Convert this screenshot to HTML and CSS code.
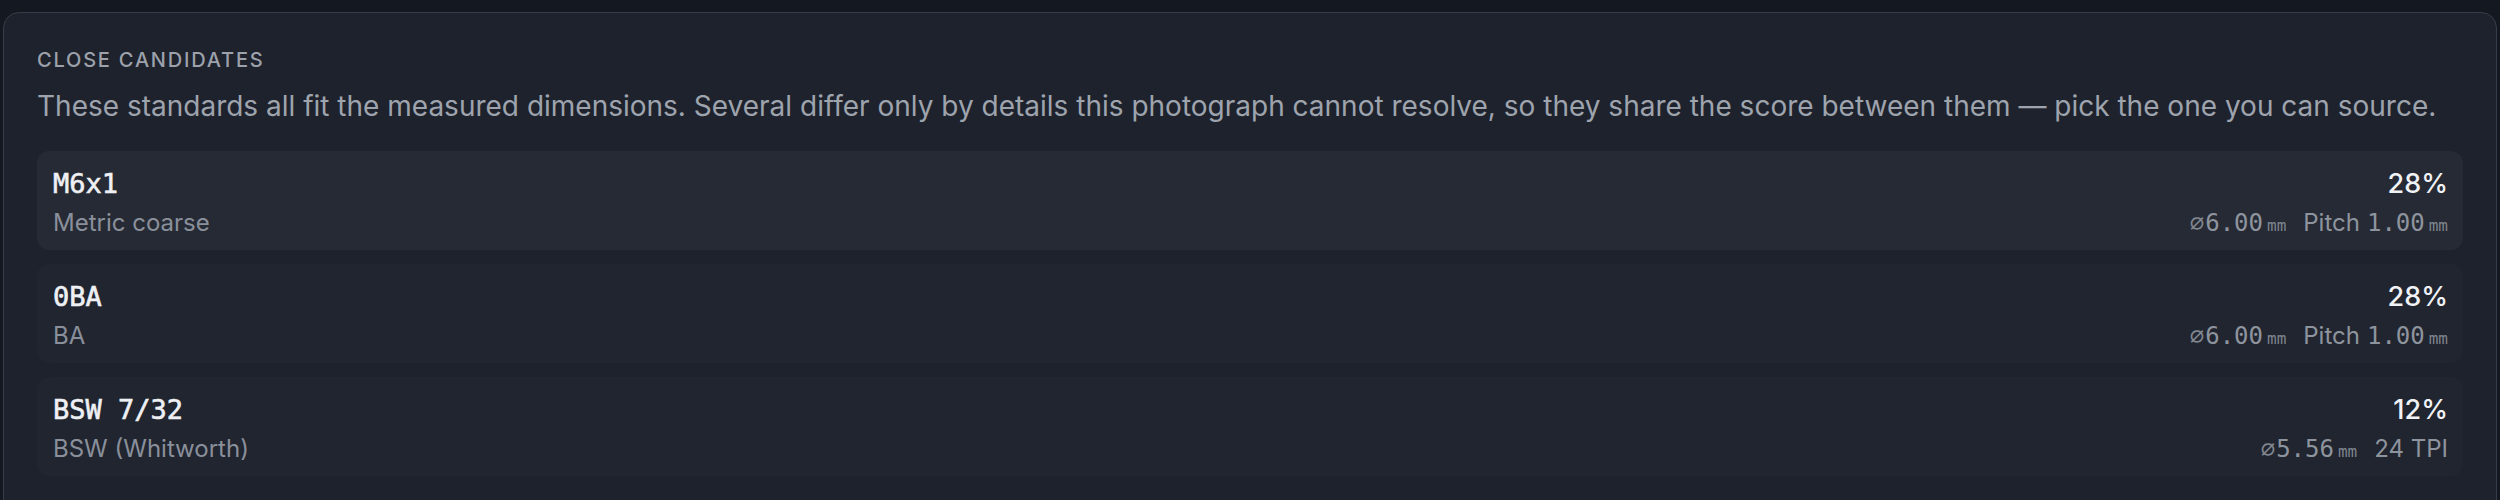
FILE: index.html
```html
<!DOCTYPE html>
<html lang="en">
<head>
<meta charset="utf-8">
<title>Close candidates</title>
<link rel="stylesheet" href="styles.css">
</head>
<body>
<section class="card">
  <h2 class="heading">Close candidates</h2>
  <p class="desc">These standards all fit the measured dimensions. Several differ only by details this photograph cannot resolve, so they share the score between them — pick the one you can source.</p>
  <ul class="list">
    <li class="row row-top">
      <div class="left">
        <div class="name">M6x1</div>
        <div class="family">Metric coarse</div>
      </div>
      <div class="right">
        <div class="pct">28%</div>
        <div class="dims"><span class="dia">⌀</span><span class="num">6.00</span><span class="unit">mm</span><span class="lbl">Pitch</span><span class="num">1.00</span><span class="unit">mm</span></div>
      </div>
    </li>
    <li class="row">
      <div class="left">
        <div class="name">0BA</div>
        <div class="family">BA</div>
      </div>
      <div class="right">
        <div class="pct">28%</div>
        <div class="dims"><span class="dia">⌀</span><span class="num">6.00</span><span class="unit">mm</span><span class="lbl">Pitch</span><span class="num">1.00</span><span class="unit">mm</span></div>
      </div>
    </li>
    <li class="row">
      <div class="left">
        <div class="name">BSW 7/32</div>
        <div class="family">BSW (Whitworth)</div>
      </div>
      <div class="right">
        <div class="pct">12%</div>
        <div class="dims"><span class="dia">⌀</span><span class="num">5.56</span><span class="unit">mm</span><span class="lbl">24 TPI</span></div>
      </div>
    </li>
  </ul>
</section>
</body>
</html>
```
FILE: styles.css
```css
* { box-sizing: border-box; }
html, body {
  margin: 0;
  padding: 0;
  background: #141821;
  font-family: Inter, "Noto Sans", sans-serif;
}
body {
  padding: 12px 3px 0 3px;
}
.card {
  background: #1e222c;
  border: 1px solid #373c48;
  border-radius: 16px;
  padding: 33px 33px 40px 33px;
  min-height: 520px;
}
.heading {
  margin: 0;
  font-size: 20px;
  line-height: 29px;
  font-weight: 500;
  text-transform: uppercase;
  letter-spacing: 0.09em;
  color: #9ca1ab;
}
.desc {
  margin: 11px 0 0 0;
  font-size: 28px;
  line-height: 40px;
  color: #9ea4ae;
}
.list {
  list-style: none;
  margin: 25px 0 0 0;
  padding: 0;
  display: flex;
  flex-direction: column;
  gap: 14px;
}
.row {
  display: flex;
  justify-content: space-between;
  align-items: flex-start;
  background: #21252f;
  border-radius: 12px;
  padding: 15px 15px 8px 16px;
  height: 99px;
}
.row-top { background: #262a34; }
.left, .right {
  display: flex;
  flex-direction: column;
  gap: 3px;
}
.right { align-items: flex-end; }
.name {
  font-family: "DejaVu Sans Mono", monospace;
  font-size: 27px;
  line-height: 36px;
  font-weight: 400;
  color: #eef0f4;
  -webkit-text-stroke: 0.6px #eef0f4;
}
.family {
  font-size: 24px;
  line-height: 36px;
  color: #8a909b;
}
.pct {
  font-size: 27px;
  line-height: 36px;
  font-weight: 500;
  color: #f0f2f5;
}
.dims {
  display: flex;
  align-items: baseline;
  font-size: 24px;
  line-height: 36px;
  color: #8e949e;
}
.dia, .num {
  font-family: "DejaVu Sans Mono", monospace;
  font-size: 24px;
}
.dia { color: #80868f; margin-right: 1px; }
.unit {
  font-family: "DejaVu Sans Mono", monospace;
  font-size: 16px;
  margin-left: 4px;
  margin-right: 17px;
  color: #7e848e;
}
.unit:last-child { margin-right: 0; }
.lbl { margin-right: 7px; }
.lbl:last-child { margin-right: 0; }
```
